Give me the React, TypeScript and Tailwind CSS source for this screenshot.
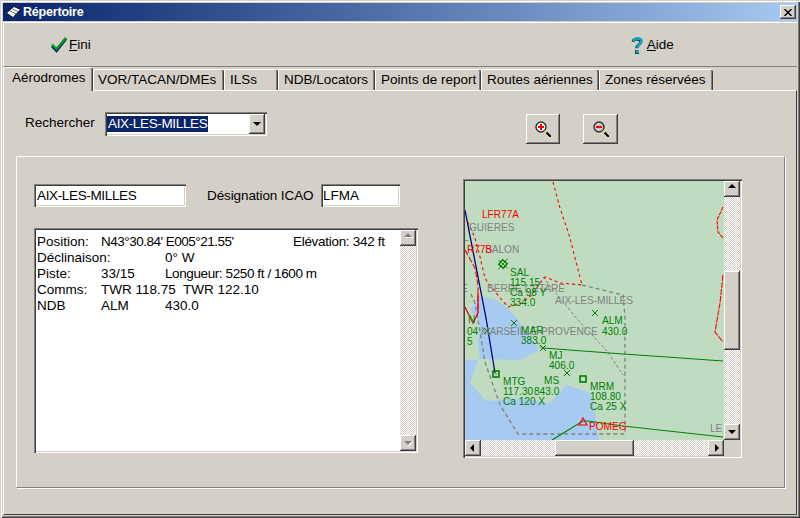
const raised =
  "bg-[#d4d0c8] shadow-[inset_-1px_-1px_0_#404040,inset_1px_1px_0_#ffffff,inset_-2px_-2px_0_#808080]";
const sunkenEdge =
  "shadow-[inset_1px_1px_0_#808080,inset_2px_2px_0_#404040,inset_-1px_-1px_0_#ffffff,inset_-2px_-2px_0_#d4d0c8]";
const dither =
  "bg-[repeating-conic-gradient(#ffffff_0%_25%,#d4d0c8_0%_50%)] bg-[length:2px_2px]";

const tabs = [
  { label: "VOR/TACAN/DMEs", width: "w-[131px]", pad: "pl-[4px]" },
  { label: "ILSs", width: "w-[54px]", pad: "pl-[5px]" },
  { label: "NDB/Locators", width: "w-[97px]", pad: "pl-[5px]" },
  { label: "Points de report", width: "w-[106px]", pad: "pl-[5px]" },
  { label: "Routes aériennes", width: "w-[118px]", pad: "pl-[5px]" },
  { label: "Zones réservées", width: "w-[114px]", pad: "pl-[5px]" },
];

const infoRows = [
  { label: "Position:", middle: "N43°30.84' E005°21.55'", right: "Elévation: 342 ft", middleClass: "tracking-[-0.5px]", rightClass: "ml-[128px] tracking-[-0.3px]" },
  { label: "Déclinaison:", middle: "", right: "0° W", middleClass: "", rightClass: "" },
  { label: "Piste:", middle: "33/15", right: "Longueur: 5250 ft / 1600 m", middleClass: "", rightClass: "tracking-[-0.4px]" },
  { label: "Comms:", middle: "TWR 118.75  TWR 122.10", right: "", middleClass: "", rightClass: "" },
  { label: "NDB", middle: "ALM", right: "430.0", middleClass: "", rightClass: "" },
];

const GRAY = "#808080";
const GREEN = "#008000";
const RED = "#ff0000";

const mapLabels: [string, number, number, string][] = [
  ["LFR77A", 482, 218, RED],
  ["GUIERES", 469, 231, GRAY],
  ["L", 463, 241, GRAY],
  ["SALON", 485, 253, GRAY],
  ["R77B", 467, 253, RED],
  ["E", 461, 292, GRAY],
  ["BERRE L'ETARE", 487, 292, GRAY],
  ["AIX-LES-MILLES", 555, 304, GRAY],
  ["MARSEILLE-PROVENCE", 481, 335, GRAY],
  ["LE", 710, 432, GRAY],
  ["SAL", 510, 276, GREEN],
  ["115.15", 510, 286, GREEN],
  ["Ca 98 Y", 510, 296, GREEN],
  ["334.0", 510, 306, GREEN],
  ["ALM", 602, 324, GREEN],
  ["430.0", 602, 335, GREEN],
  ["N", 468, 323, GREEN],
  ["04", 467, 335, GREEN],
  ["5", 467, 345, GREEN],
  ["MAR", 521, 334, GREEN],
  ["383.0", 521, 344, GREEN],
  ["MJ", 549, 359, GREEN],
  ["406.0", 549, 369, GREEN],
  ["MTG", 503, 385, GREEN],
  ["117.30", 503, 395, GREEN],
  ["Ca 120 X", 503, 405, GREEN],
  ["MS", 544, 384, GREEN],
  ["843.0", 534, 395, GREEN],
  ["MRM", 590, 390, GREEN],
  ["108.80", 590, 400, GREEN],
  ["Ca 25 X", 590, 410, GREEN],
  ["POMEG", 589, 430, RED],
];

const crosses = [
  [514, 323],
  [595, 313],
  [543, 348],
  [567, 373],
  [487, 331],
];

function Triangle({ dir, disabled }: { dir: "up" | "down" | "left" | "right"; disabled?: boolean }) {
  const pts = {
    up: "4,7 8,3 12,7",
    down: "4,6 12,6 8,10",
    left: "9,4 9,12 5,8",
    right: "7,4 7,12 11,8",
  }[dir];
  return (
    <svg viewBox="0 0 16 16" className="w-4 h-4 block">
      {disabled && <polygon points={pts} fill="#ffffff" transform="translate(1 1)" />}
      <polygon points={pts} fill={disabled ? "#808080" : "#000000"} />
    </svg>
  );
}

function ScrollButton(props: { dir: "up" | "down" | "left" | "right"; disabled?: boolean }) {
  return (
    <div className={`w-4 h-4 shrink-0 ${raised}`}>
      <Triangle {...props} />
    </div>
  );
}

function CheckIcon() {
  return (
    <svg viewBox="0 0 18 16" className="w-[18px] h-4 block">
      <polyline points="2,9 6.5,13.5 16,1.5" fill="none" stroke="#001a70" strokeWidth="3" />
      <polyline points="2,7.5 6.5,12 16,1" fill="none" stroke="#0a9a1e" strokeWidth="2.4" />
    </svg>
  );
}

function HelpIcon() {
  return (
    <svg viewBox="0 0 13 18" className="w-[13px] h-[18px] block">
      <path d="M3 5 C3 1.5 10.5 1.5 10.5 5 C10.5 8 6.5 8 6.5 11.5" fill="none" stroke="#004a5a" strokeWidth="3" transform="translate(-0.8 0.8)" />
      <path d="M3 5 C3 1.5 10.5 1.5 10.5 5 C10.5 8 6.5 8 6.5 11.5" fill="none" stroke="#14a6b8" strokeWidth="2.6" />
      <rect x="4" y="14" width="4" height="4" fill="#004a5a" />
      <rect x="5" y="14" width="3" height="3" fill="#14a6b8" />
    </svg>
  );
}

function BookIcon() {
  return (
    <svg viewBox="0 0 15 12" className="w-[15px] h-3 block">
      <polygon points="0.5,7 8,0.5 14.5,3.5 7,11.5" fill="#ffffff" stroke="#000000" strokeWidth="0.8" />
      <path d="M4 5 L10.5 8 M6.5 3 L12.5 5.8" stroke="#404040" strokeWidth="0.8" />
    </svg>
  );
}

function ZoomIcon({ plus }: { plus?: boolean }) {
  return (
    <svg viewBox="0 0 16 16" className="w-4 h-4 block">
      <circle cx="6" cy="6" r="5" fill={plus ? "#f2f2f2" : "#c8c8c8"} stroke="#303030" strokeWidth="1.4" />
      <rect x="3" y="5" width="6" height="2" fill="#ff0000" />
      {plus && <rect x="5" y="3" width="2" height="6" fill="#ff0000" />}
      <line x1="11.5" y1="11.5" x2="16" y2="16" stroke="#000000" strokeWidth="2" />
      <rect x="9.5" y="9.5" width="2" height="2" fill="#e8d840" />
    </svg>
  );
}

function MapDrawing() {
  return (
    <svg viewBox="465 181 259 259" className="w-[259px] h-[259px] block bg-[#c0dcc0] font-['Liberation_Sans',sans-serif]">
      <polygon
        points="470,310 480,296 496,300 506,307 516,317 527,332 538,348 538,351 520,360 480,359 478,345 480,325 477,318"
        fill="#a6caf0"
      />
      <polygon
        points="465,360 478,360 470,383 486,401 520,398 550,403 566,385 591,393 595,412 599,440 465,440"
        fill="#a6caf0"
      />

      <polyline points="582,285 623,295 625,318 625,434 518,434 500,405 485,362 480,332 475,303 470,292" fill="none" stroke="#808080" strokeWidth="1.3" strokeDasharray="4 3" />
      <polyline points="543,277 560,298 578,320 607,351 623,375" fill="none" stroke="#808080" strokeWidth="1" strokeDasharray="3 2" />
      <polyline points="533,338 543,350" fill="none" stroke="#808080" strokeWidth="1" strokeDasharray="3 2" />

      <polyline points="543,348 623,354 667,357 723,361" fill="none" stroke={GREEN} strokeWidth="1.2" />
      <polyline points="552,440 583,421 588,421 623,426 723,437" fill="none" stroke={GREEN} strokeWidth="1.2" />

      <polyline points="465,210 486,318 495,373" fill="none" stroke="#000080" strokeWidth="1.3" />

      <polyline
        points="553,182 560,208 570,238 575,258 582,285 560,283 545,277 540,283 532,295 522,303 508,307 502,300 488,283 485,278 480,257 475,238 467,220"
        fill="none"
        stroke={RED}
        strokeWidth="1.1"
        strokeDasharray="3 3"
      />
      <polyline points="465,250 475,268 478,285 478,313" fill="none" stroke={RED} strokeWidth="1.1" strokeDasharray="6 2" />
      <polyline points="465,307 473,323 478,313 478,293" fill="none" stroke={RED} strokeWidth="1.3" />
      <polyline points="723,207 717,220 718,232 723,238" fill="none" stroke={RED} strokeWidth="1.1" strokeDasharray="4 1" />
      <polyline points="723,275 720,303 715,332 723,342" fill="none" stroke={RED} strokeWidth="1.1" strokeDasharray="6 1" />

      {crosses.map(([x, y]) => (
        <path key={`${x}-${y}`} d={`M${x - 3} ${y - 3} L${x + 3} ${y + 3} M${x + 3} ${y - 3} L${x - 3} ${y + 3}`} stroke={GREEN} strokeWidth="1" />
      ))}

      <rect x="493" y="371" width="6" height="6" fill="none" stroke={GREEN} strokeWidth="1.6" />
      <rect x="495.5" y="373.5" width="1" height="1" fill="#000080" />
      <rect x="580" y="376" width="6" height="6" fill="none" stroke={GREEN} strokeWidth="1.6" />

      <g transform="rotate(40 503 264)">
        <rect x="500" y="261" width="6" height="6" fill="none" stroke={GREEN} strokeWidth="1.4" />
        <path d="M503 257 V271 M497 264 H509" stroke={GREEN} strokeWidth="0.8" />
      </g>

      <polygon points="583,418 587,425 579,425" fill="none" stroke={RED} strokeWidth="1.2" />

      {mapLabels.map(([text, x, y, fill]) => (
        <text key={`${text}-${x}`} transform={`translate(${x} ${y}) scale(0.92 1)`} fill={fill} fontSize="11">
          {text}
        </text>
      ))}
    </svg>
  );
}

export default function App() {
  return (
    <div className="w-[800px] h-[518px] overflow-hidden flex flex-col p-[3px] bg-[#d4d0c8] text-[13.5px] leading-4 text-black font-['Liberation_Sans',sans-serif] shadow-[inset_1px_1px_0_#d4d0c8,inset_2px_2px_0_#ffffff,inset_-1px_-1px_0_#404040,inset_-2px_-2px_0_#808080]">
      <div className="h-[18px] shrink-0 flex items-center pl-[3px] pr-[1px] bg-gradient-to-r from-[#0a246a] to-[#a6caf0]">
        <BookIcon />
        <span className="ml-[2px] text-white font-bold text-[12.5px] tracking-[-0.2px]">Répertoire</span>
        <div className={`ml-auto w-4 h-[14px] flex items-center justify-center ${raised}`}>
          <svg viewBox="0 0 8 7" className="w-2 h-[7px] block">
            <path d="M0.5 0 L7.5 7 M7.5 0 L0.5 7" stroke="#000000" strokeWidth="1.4" />
          </svg>
        </div>
      </div>

      <div className="mt-[1px] h-[45px] shrink-0 flex items-center border-t border-l border-white border-b-[#808080] border-b pl-[46px]">
        <CheckIcon />
        <span className="ml-[1px]">
          <span className="underline">F</span>ini
        </span>
        <div className="ml-[540px] flex items-center">
          <HelpIcon />
          <span className="ml-[3px]">
            <span className="underline">A</span>ide
          </span>
        </div>
      </div>

      <div className="h-[23px] shrink-0 flex items-start relative z-10">
        <div className="w-[90px] h-6 pl-2 pt-[2px] bg-[#d4d0c8] border-t border-l border-white rounded-t-[2px] shadow-[inset_-1px_0_0_#404040,inset_-2px_0_0_#808080]">
          Aérodromes
        </div>
        {tabs.map((tab) => (
          <div
            key={tab.label}
            className={`${tab.width} ${tab.pad} h-[21px] mt-[2px] pt-[2px] whitespace-nowrap border-t border-l border-white rounded-t-[2px] shadow-[inset_-1px_0_0_#404040,inset_-2px_0_0_#808080]`}
          >
            {tab.label}
          </div>
        ))}
      </div>

      <div className="flex-1 min-h-0 border-t border-l border-white border-r-[#404040] border-r border-b border-b-[#404040]">
        <div className="h-[65px] flex items-start pl-[21px]">
          <span className="w-20 mt-6">Rechercher</span>
          <div className={`mt-[21px] w-[162px] h-6 flex items-center pl-[2px] pr-[2px] bg-white ${sunkenEdge}`}>
            <span className="bg-[#0a246a] text-white px-px h-4 tracking-[-0.35px]">AIX-LES-MILLES</span>
            <div className={`ml-auto w-4 h-5 flex items-center ${raised}`}>
              <Triangle dir="down" />
            </div>
          </div>
          <div className={`ml-[259px] mt-[23px] w-[34px] h-[30px] flex items-center justify-center ${raised}`}>
            <ZoomIcon plus />
          </div>
          <div className={`ml-[23px] mt-[23px] w-[35px] h-[30px] flex items-center justify-center ${raised}`}>
            <ZoomIcon />
          </div>
        </div>

        <div className="ml-3 w-[769px] h-[332px] flex border-t border-l border-white border-r border-b border-r-[#808080] border-b-[#808080] shadow-[1px_1px_0_#ffffff]">
          <div className="ml-[17px] w-[384px] pt-[27px]">
            <div className="flex items-center h-[23px]">
              <div className={`w-[152px] h-[23px] pl-[3px] flex items-center tracking-[-0.35px] bg-white ${sunkenEdge}`}>AIX-LES-MILLES</div>
              <span className="ml-[21px] w-[114px] tracking-[-0.1px]">Désignation ICAO</span>
              <div className={`w-[79px] h-[23px] pl-[2px] flex items-center bg-white ${sunkenEdge}`}>LFMA</div>
            </div>
            <div className={`mt-[21px] w-[384px] h-[225px] flex p-[2px] bg-white ${sunkenEdge}`}>
              <div className="flex-1 pl-px pt-1">
                {infoRows.map((row) => (
                  <div key={row.label} className="flex h-4 whitespace-pre">
                    <span className="w-16">{row.label}</span>
                    <span className={`w-16 ${row.middleClass}`}>{row.middle}</span>
                    <span className={row.rightClass}>{row.right}</span>
                  </div>
                ))}
              </div>
              <div className={`w-4 flex flex-col ${dither}`}>
                <ScrollButton dir="up" disabled />
                <div className="flex-1" />
                <ScrollButton dir="down" disabled />
              </div>
            </div>
          </div>

          <div className={`ml-[45px] mt-[22px] w-[279px] h-[279px] p-[2px] bg-[#d4d0c8] ${sunkenEdge}`}>
            <div className="flex">
              <MapDrawing />
              <div className={`w-4 h-[259px] flex flex-col ${dither}`}>
                <ScrollButton dir="up" />
                <div className="h-[74px]" />
                <div className={`w-4 h-[79px] ${raised}`} />
                <div className="flex-1" />
                <ScrollButton dir="down" />
              </div>
            </div>
            <div className={`w-[259px] h-4 flex ${dither}`}>
              <ScrollButton dir="left" />
              <div className="w-[74px]" />
              <div className={`w-[79px] h-4 ${raised}`} />
              <div className="flex-1" />
              <ScrollButton dir="right" />
            </div>
          </div>
        </div>
      </div>
    </div>
  );
}
